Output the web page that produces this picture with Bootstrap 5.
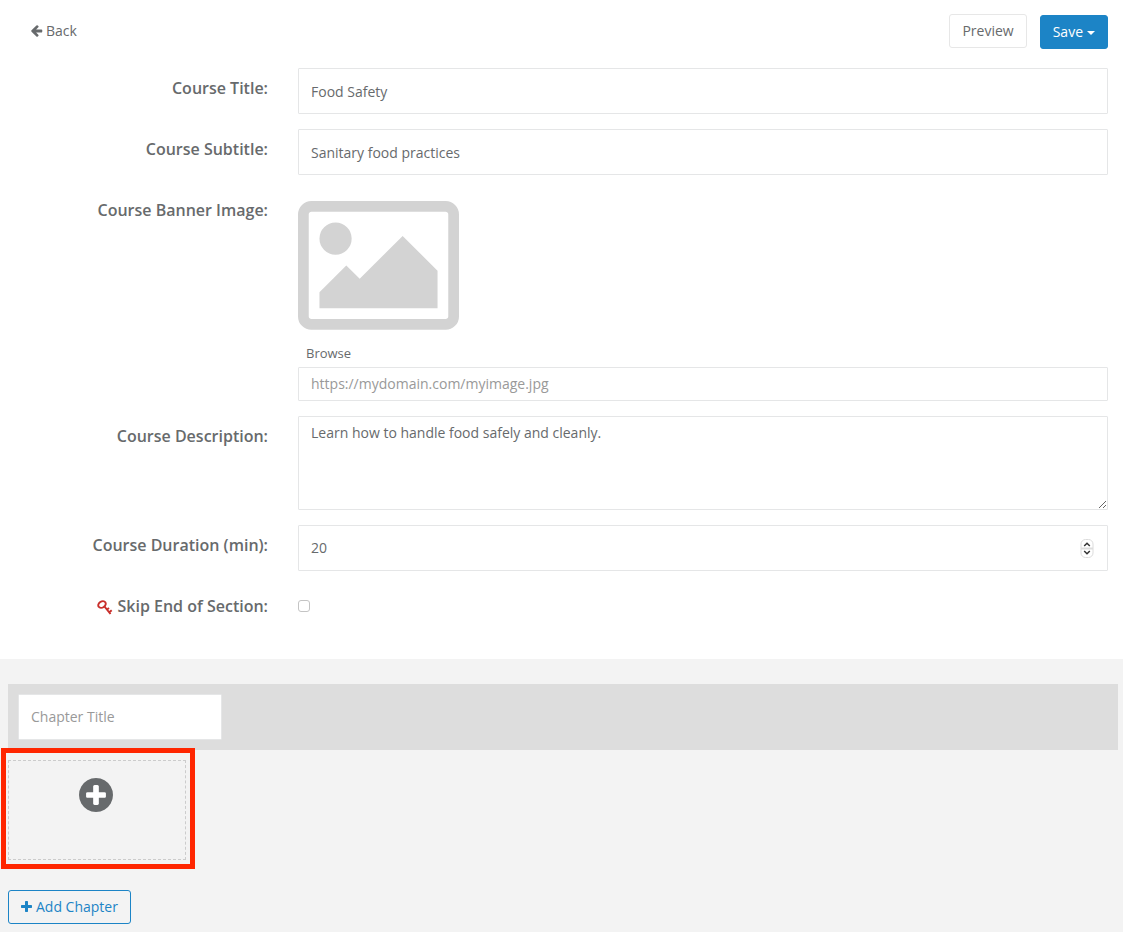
<!DOCTYPE html>
<html lang="en">
<head>
<meta charset="utf-8">
<meta name="viewport" content="width=device-width, initial-scale=1">
<title>Edit Course</title>
<link href="https://cdn.jsdelivr.net/npm/bootstrap@5.3.0/dist/css/bootstrap.min.css" rel="stylesheet">
<style>
  body { font-family: "Open Sans", sans-serif; font-size: 14px; line-height: 20px; color: #676a6c; background: #f3f3f3; }
  .course-form { padding: 14px 0 26px 3px; }
  .toolbar { padding: 0 15px 0 28px; margin-bottom: 19px; gap: 13px; }
  .btn { font-size: 14px; line-height: 20px; padding: 6px 12px; border-radius: 3px; }
  .btn-preview { color: #676a6c; background: #fff; border-color: #e7e7e7; }
  .btn-save { color: #fff; background: #1c84c6; border-color: #1c84c6; margin-top: 1px; }
  .btn-save::after { border-width: 4px 4px 0; margin-left: 4px; vertical-align: 2px; }
  .btn-add { color: #1c84c6; border-color: #1c84c6; gap: 4px; }
  .back-link { color: #676a6c; text-decoration: none; padding-top: 7px; gap: 3px; }
  .form-row { --bs-gutter-x: 30px; margin: 0 0 15px; }
  .form-row > .field-label { font-size: 16px; line-height: 24px; font-weight: 600; padding-top: 8px; text-align: right; }
  .form-control, .form-control:focus { font-size: 14px; line-height: 20px; padding: 6px 12px; color: #676a6c; border: 1px solid #e5e6e7; border-radius: 1px; }
  .form-control::placeholder { color: #999; }
  .tall { height: 46px; }
  textarea.form-control { height: 94px; }
  .banner-icon { display: block; width: 161px; margin-top: 11px; fill: #d3d3d3; }
  .browse-btn { font-size: 13px; font-weight: 400; color: #676a6c; padding: 0 8px; margin: 13px 0 4px; border: 0; background: none; display: block; }
  input[type=number] { appearance: textfield; -moz-appearance: textfield; }
  input[type=number]::-webkit-inner-spin-button { display: none; }
  .stepper { right: 14px; top: 14px; width: 14px; height: 19px; }
  .form-check-input { width: 12px; height: 12px; margin: 14px 0 0; border: 1px solid #c4c4c4; display: block; }
  .form-check-input[type=checkbox] { border-radius: 3px; }
  .chapters { padding: 25px 5px 8px 8px; }
  .chapter-bar { background: #ddd; padding: 10px; }
  .chapter-title { width: 204px; }
  .highlight { width: 194px; height: 121px; margin: -2px 0 21px -7px; border: 5px solid #ff2600; padding: 7px 4px 4px 2px; position: relative; }
  .add-section { width: 178px; height: 100px; border: 1px dashed #ccc; background: none; color: #676a6c; padding: 17px 2px 0 0; }
</style>
</head>
<body>
<main>
  <form class="course-form bg-white">
    <div class="toolbar d-flex align-items-start">
      <a href="#" class="back-link me-auto d-flex align-items-center">
        <svg width="12" height="12" viewBox="0 0 1536 1600" fill="currentColor" aria-hidden="true"><path d="M1472 736v128q0 53-32.500 90.500T1355 992H651l293 294q38 36 38 90t-38 90l-75 76q-37 37-90 37-52 0-91-37L37 890Q0 853 0 800q0-52 37-91L688 59q38-38 91-38 52 0 90 38l75 74q38 38 38 91t-38 91L651 608h704q52 0 84.500 37.500T1472 736z"/></svg>Back</a>
      <button type="button" class="btn btn-preview">Preview</button>
      <button type="button" class="btn btn-save dropdown-toggle" data-bs-toggle="dropdown">Save</button>
    </div>

    <div class="row form-row">
      <label class="col-3 field-label" for="title">Course Title:</label>
      <div class="col-9"><input id="title" type="text" class="form-control tall" value="Food Safety"></div>
    </div>
    <div class="row form-row">
      <label class="col-3 field-label" for="subtitle">Course Subtitle:</label>
      <div class="col-9"><input id="subtitle" type="text" class="form-control tall" value="Sanitary food practices"></div>
    </div>
    <div class="row form-row">
      <label class="col-3 field-label" for="banner">Course Banner Image:</label>
      <div class="col-9">
        <svg class="banner-icon" viewBox="0 0 1920 1536" aria-hidden="true"><path d="M640 448q0 80-56 136t-136 56-136-56-56-136 56-136 136-56 136 56 56 136zm1024 384v448H256v-192l320-320 160 160 512-512zm96-704H160q-13 0-22.500 9.500T128 160v1216q0 13 9.500 22.500t22.500 9.500h1600q13 0 22.500-9.500t9.500-22.500V160q0-13-9.500-22.500T1760 128zm160 32v1216q0 66-47 113t-113 47H160q-66 0-113-47T0 1376V160Q0 94 47 47T160 0h1600q66 0 113 47t47 113z"/></svg>
        <button type="button" class="browse-btn">Browse</button>
        <input id="banner" type="url" class="form-control" placeholder="https://mydomain.com/myimage.jpg">
      </div>
    </div>
    <div class="row form-row">
      <label class="col-3 field-label" for="description">Course Description:</label>
      <div class="col-9"><textarea id="description" class="form-control">Learn how to handle food safely and cleanly.</textarea></div>
    </div>
    <div class="row form-row">
      <label class="col-3 field-label" for="duration">Course Duration (min):</label>
      <div class="col-9"><div class="position-relative">
        <input id="duration" type="number" class="form-control tall" value="20">
        <svg class="stepper position-absolute" viewBox="0 0 14 19" fill="none" aria-hidden="true"><rect x="1" y=".5" width="12" height="18" rx="4.500" fill="#fff" stroke="#dcdcdc"/><path d="M1 9.500h12" stroke="#ddd" stroke-width="2"/><path d="M4.200 7 7 4.200 9.800 7M4.200 12 7 14.800 9.800 12" stroke="#333" stroke-width="1.500"/></svg>
      </div></div>
    </div>
    <div class="row form-row">
      <label class="col-3 field-label" for="skip"><svg width="16" height="16" viewBox="0 0 16 16" fill="none" stroke="#c9302c" stroke-width="2" aria-hidden="true"><ellipse cx="5" cy="4.500" rx="4" ry="3" transform="rotate(-35 5 4.500)"/><path d="M7.500 6.500 13.500 14M10 9.500l2-1.500M12.300 12.300l2.400-2"/></svg> Skip End of Section:</label>
      <div class="col-9"><input id="skip" type="checkbox" class="form-check-input"></div>
    </div>
  </form>

  <section class="chapters">
    <div class="chapter-bar"><input type="text" class="form-control tall chapter-title" placeholder="Chapter Title" aria-label="Chapter Title"></div>
    <div class="highlight">
      <button type="button" class="add-section d-flex justify-content-center align-items-start" aria-label="Add section">
        <svg width="34" height="34" viewBox="0 0 1536 1536" fill="currentColor" aria-hidden="true"><circle cx="768" cy="768" r="700" fill="#fff"/><path d="M1216 832v-128q0-26-19-45t-45-19H896V384q0-26-19-45t-45-19H704q-26 0-45 19t-19 45v256H384q-26 0-45 19t-19 45v128q0 26 19 45t45 19h256v256q0 26 19 45t45 19h128q26 0 45-19t19-45V896h256q26 0 45-19t19-45zm320-64q0 209-103 385.500T1153.500 1433 768 1536t-385.500-103T103 1153.500 0 768t103-385.500T382.500 103 768 0t385.500 103T1433 382.500 1536 768z"/></svg>
      </button>
    </div>
    <button type="button" class="btn btn-add d-inline-flex align-items-center"><svg width="11" height="11" viewBox="0 0 1408 1408" fill="currentColor" aria-hidden="true"><path d="M1408 608v192q0 40-28 68t-68 28H896v416q0 40-28 68t-68 28H608q-40 0-68-28t-28-68V896H96q-40 0-68-28T0 800V608q0-40 28-68t68-28h416V96q0-40 28-68t68-28h192q40 0 68 28t28 68v416h416q40 0 68 28t28 68z"/></svg>Add Chapter</button>
  </section>
</main>
<script src="https://cdn.jsdelivr.net/npm/bootstrap@5.3.0/dist/js/bootstrap.bundle.min.js"></script>
</body>
</html>
